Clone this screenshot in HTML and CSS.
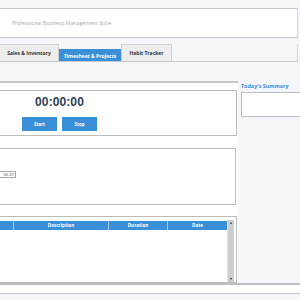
FILE: index.html
```html
<!DOCTYPE html>
<html>
<head>
<meta charset="utf-8">
<link rel="stylesheet" href="styles.css">
</head>
<body>
<div class="app">
  <header class="hdr"><span class="hdr-title">Professional Business Management Suite</span></header>
  <nav class="tabs">
    <div class="tab">Sales &amp; Inventory</div>
    <div class="tab active">Timesheet &amp; Projects</div>
    <div class="tab">Habit Tracker</div>
  </nav>
  <main class="page">
    <section class="left">
      <div class="box timer-box">
        <div class="timer-col">
          <div class="timer">00:00:00</div>
          <div class="btns">
            <button class="btn">Start</button>
            <button class="btn">Stop</button>
          </div>
        </div>
      </div>
      <div class="box date-box">
        <div class="date-input"><span class="date-text">06-07</span></div>
      </div>
      <div class="box grid-box">
        <div class="grid">
          <div class="grid-main">
            <div class="grid-head">
              <div class="col c0"></div>
              <div class="col c1">Description</div>
              <div class="col c2">Duration</div>
              <div class="col c3">Date</div>
            </div>
            <div class="grid-body"></div>
          </div>
          <div class="vscroll">
            <span class="arr up"></span>
            <span class="arr down"></span>
          </div>
        </div>
      </div>
    </section>
    <aside class="right">
      <h3 class="sum-title">Today's Summary</h3>
      <div class="sum-box"></div>
    </aside>
  </main>
  <footer class="status"></footer>
</div>
</body>
</html>
```
FILE: styles.css
```css
* { box-sizing: border-box; }
html, body { margin: 0; padding: 0; }
body {
  background: #f4f6f9;
  font-family: "Open Sans", "DejaVu Sans", sans-serif;
  width: 300px;
  height: 300px;
  overflow: hidden;
}
.app {
  padding-top: 8px;
  width: 300px;
}
.hdr {
  height: 30px;
  width: 298px;
  background: #fff;
  border-top: 1px solid #c6c6c6;
  border-bottom: 1px solid #c6c6c6;
  border-right: 1px solid #d4d4d4;
  display: flex;
  align-items: center;
  padding-left: 12px;
}
.hdr-title {
  font-size: 5.2px;
  color: #a8a8a8;
}
.tabs {
  margin-top: 6px;
  height: 18px;
  width: 298px;
  display: flex;
  align-items: flex-end;
  border-bottom: 1px solid #c8c8c8;
  border-right: 1px solid #d4d4d4;
}
.tab {
  height: 17px;
  padding: 0 7px;
  background: #ededed;
  border: 1px solid #cfcfcf;
  border-bottom: none;
  font-size: 5px;
  font-weight: 700;
  color: #333;
  display: flex;
  align-items: center;
  justify-content: center;
}
.tab:first-child { width: 59px; border-left: none; }
.tab.active {
  width: 62px;
  height: 12px;
  background: #3a8fd9;
  border-color: #3a8fd9;
  color: #fff;
  padding: 0;
}
.tab:last-child { width: 51px; }
.page {
  margin-top: 19px;
  display: flex;
  height: 204px;
  border-bottom: 2px solid #bdbdbd;
}
.left {
  width: 238px;
  background: #fff;
  border-top: 2px solid #c6c6c6;
  padding-top: 7px;
  display: flex;
  flex-direction: column;
  gap: 12px;
}
.box {
  width: 237px;
  background: #fff;
  border: 1px solid #bcbcbc;
  border-left: none;
  overflow: hidden;
}
.timer-box { height: 47px; }
.timer-col {
  width: 119px;
  display: flex;
  flex-direction: column;
  align-items: center;
  padding-top: 4px;
}
.timer {
  font-family: "Liberation Sans", Arial, sans-serif;
  font-weight: 700;
  font-size: 12px;
  line-height: 14px;
  color: #2c3e50;
  letter-spacing: 0.1px;
}
.btns {
  margin-top: 8px;
  display: flex;
  gap: 5px;
}
.btn {
  width: 35px;
  height: 14px;
  border: none;
  padding: 0;
  background: #3a8fd9;
  color: #fff;
  font-family: "Open Sans", sans-serif;
  font-size: 4.5px;
  font-weight: 700;
}
.date-box {
  width: 236px;
  height: 58px;
  padding-top: 22px;
}
.date-input {
  width: 16px;
  height: 7px;
  border: 1px solid #a9a9a9;
  border-left: none;
  display: flex;
  align-items: center;
  justify-content: flex-end;
  padding-right: 1px;
}
.date-text {
  font-size: 4px;
  color: #555;
  white-space: nowrap;
}
.grid-box {
  height: 69px;
  margin-top: -1px;
  padding-top: 3px;
}
.grid {
  width: 234px;
  height: 63px;
  display: flex;
  border-bottom: 1px solid #d0d0d0;
}
.grid-main {
  width: 227px;
  display: flex;
  flex-direction: column;
}
.grid-head {
  margin-top: 1px;
  height: 9px;
  background: #3a8fd9;
  display: flex;
}
.col {
  font-size: 4.6px;
  font-weight: 700;
  color: #fff;
  display: flex;
  align-items: center;
  justify-content: center;
  border-right: 1px solid #a9c9e6;
}
.c0 { width: 14px; }
.c1 { width: 95px; }
.c2 { width: 59px; }
.c3 { width: 59px; border-right: none; }
.grid-body { flex: 1; background: #fff; }
.vscroll {
  width: 7px;
  background: #cdcdcd;
  border-left: 1px solid #e4e4e4;
  display: flex;
  flex-direction: column;
  justify-content: space-between;
  align-items: center;
  padding: 2px 0;
}
.arr {
  width: 0;
  height: 0;
  border-left: 1.5px solid transparent;
  border-right: 1.5px solid transparent;
}
.arr.up { border-bottom: 2px solid #333; }
.arr.down { border-top: 2px solid #333; }
.right {
  flex: 1;
  padding-left: 3px;
  padding-top: 1px;
}
.sum-title {
  margin: 0;
  font-size: 5.4px;
  font-weight: 700;
  color: #3a8fd9;
  line-height: 8px;
}
.sum-box {
  margin-top: 2px;
  height: 25px;
  background: #fff;
  border: 1px solid #bcbcbc;
  border-right: none;
}
.status {
  height: 9px;
  background: #fff;
  border-bottom: 1px solid #c4c4c4;
}
```
